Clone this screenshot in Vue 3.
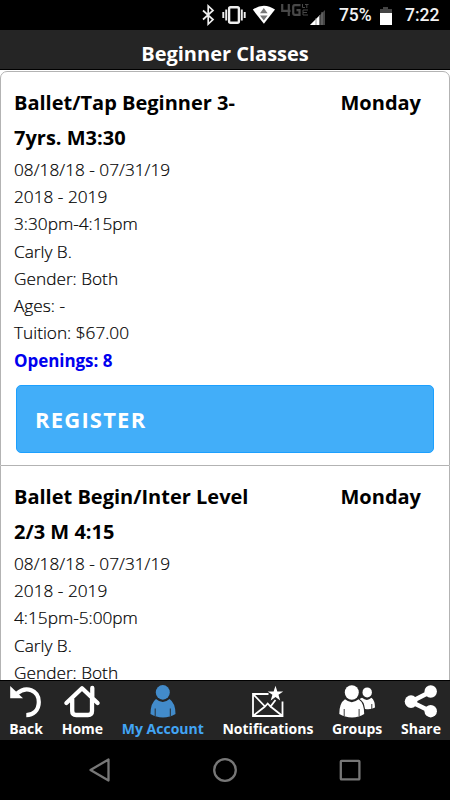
<script setup>
const classes = [
  {
    title: ['Ballet/Tap Beginner 3-', '7yrs. M3:30'],
    day: 'Monday',
    lines: ['08/18/18 - 07/31/19', '2018 - 2019', '3:30pm-4:15pm', 'Carly B.', 'Gender: Both', 'Ages: -', 'Tuition: $67.00'],
    openings: 8,
  },
  {
    title: ['Ballet Begin/Inter Level', '2/3 M 4:15'],
    day: 'Monday',
    lines: ['08/18/18 - 07/31/19', '2018 - 2019', '4:15pm-5:00pm', 'Carly B.', 'Gender: Both'],
    openings: null,
  },
]
</script>

<template>
  <div class="screen">
    <div class="status">
      <svg class="signals" width="140" height="30" viewBox="0 0 140 30">
        <path d="M3 10.5L13 19.5L8.2 24V6L13 10.5L3 19.5" fill="none" stroke="#eee" stroke-width="1.7" />
        <g fill="none" stroke="#eee">
          <rect x="29.1" y="7.2" width="9.8" height="15.6" rx="1.5" stroke-width="2.4" />
          <path d="M26.2 9.5V20.5M41.8 9.5V20.5" stroke-width="1.9" />
          <path d="M23.3 12V18M44.7 12V18" stroke-width="1.9" />
        </g>
        <path d="M52.8 9.6Q64 2 75 9.6L63.9 23.8Z" fill="#fff" />
        <path d="M60 13.2L63.8 8L67.6 13.2ZM60 15.6H67.6L63.8 20.5Z" fill="#777" />
        <g fill="none" stroke="#484848" stroke-width="2.2">
          <path d="M82.2 4V10.8H90.5M88.8 4V16M100.5 5.2H94.8Q93.2 5.2 93.2 7V13Q93.2 14.8 95 14.8H99.5V10.2H96.5" />
          <path d="M102.5 4V7.5H105M105 4.5H108.5M106.8 4.5V8M108 10H103V15H108M103 12.5H107" stroke-width="1" />
        </g>
        <path d="M110 25L125 10V25Z" fill="#444" />
        <path d="M110 25L119 16V25Z" fill="#fff" />
        <path d="M116 18V25M119.5 15V25M122 12V25" stroke="#888" stroke-width=".8" />
      </svg>
      <span class="percent">75%</span>
      <svg class="battery" width="14" height="20" viewBox="0 0 14 20">
        <path d="M4 1H9V3H13V7H1V3H4Z" fill="#444" />
        <path d="M1 7H13V19H1Z" fill="#fff" />
      </svg>
      <span class="clock">7:22</span>
    </div>

    <header class="header">Beginner Classes</header>

    <main class="list">
      <section v-for="c in classes" :key="c.title[0]" class="card">
        <div class="top">
          <h2 class="title"><span v-for="t in c.title" :key="t">{{ t }}</span></h2>
          <span class="day">{{ c.day }}</span>
        </div>
        <p v-for="line in c.lines" :key="line" class="line">{{ line }}</p>
        <p v-if="c.openings" class="line openings">Openings: {{ c.openings }}</p>
        <button v-if="c.openings" class="register">REGISTER</button>
      </section>
    </main>

    <nav class="tabs">
      <a class="tab back">
        <svg width="34" height="34" viewBox="0 0 34 34">
          <path d="M8 8.5C17 .5 29.8 5 29.8 17C29.8 25.5 24 30.2 17.3 30.2" fill="none" stroke="#fff" stroke-width="4.2" />
          <path d="M1.2 1V13.2H14Z" fill="#fff" />
        </svg>
        <span>Back</span>
      </a>
      <a class="tab home">
        <svg width="38" height="34" viewBox="0 0 38 34">
          <path d="M3.4 18L19 3.3L34.6 18M29.3 12V3M9.2 14V26Q9.2 30 13.2 30H25Q29 30 29 26V14" fill="none" stroke="#fff" stroke-width="4.3" stroke-linejoin="round" stroke-linecap="round" />
        </svg>
        <span>Home</span>
      </a>
      <a class="tab account">
        <svg width="28" height="34" viewBox="0 0 28 34">
          <g fill="#428bca">
            <ellipse cx="13.8" cy="7.4" rx="7" ry="7.3" />
            <path d="M7 14Q13.8 20 20.5 14Q26.5 18 26.5 29Q21 32.4 14 32.4Q7 32.4 1.5 29Q1.5 18 7 14Z" />
          </g>
          <path d="M6.2 23.5V31M21.3 23.5V31" stroke="#252525" stroke-width=".9" />
        </svg>
        <span>My Account</span>
      </a>
      <a class="tab notices">
        <svg width="34" height="34" viewBox="0 0 34 34">
          <path d="M17.5 9H2V31H31.5V16.5M2 9L14 21.5L16.7 18.5L19.5 21.5L24.5 15M2 31L14 21.5M31.5 31L19.5 21.5" fill="none" stroke="#fff" stroke-width="1.8" />
          <path d="M24.5 .8L26.3 6.4H32.2L27.5 9.8L29.2 15.5L24.5 12L19.7 15.5L21.4 9.8L16.7 6.4H22.6Z" fill="#fff" />
        </svg>
        <span>Notifications</span>
      </a>
      <a class="tab groups">
        <svg width="38" height="34" viewBox="0 0 38 34">
          <g fill="#fff">
            <ellipse cx="29.2" cy="7.4" rx="4.7" ry="5" />
            <path d="M24 12.8Q29 17 33.4 12.8Q37 15.5 37 22.5Q33 25 27 24Q26 16 21.5 14Z" />
            <ellipse cx="13.8" cy="7.5" rx="7" ry="7.3" />
            <path d="M7 14.3Q13.8 20 20.5 14.3Q26.2 18 26.2 29Q21 32.4 14 32.4Q7 32.4 1.3 29Q1.3 18 7 14.3Z" />
          </g>
          <path d="M6.2 24V31M21.1 24V31M33.8 19V24" stroke="#252525" stroke-width=".9" />
        </svg>
        <span>Groups</span>
      </a>
      <a class="tab share">
        <svg width="34" height="34" viewBox="0 0 34 34">
          <path d="M27 6.5L7 16.8L27 26.5" fill="none" stroke="#fff" stroke-width="4.6" />
          <g fill="#fff">
            <circle cx="26.7" cy="6.5" r="6.2" />
            <circle cx="7" cy="16.6" r="6.3" />
            <circle cx="26.7" cy="26.2" r="6.2" />
          </g>
        </svg>
        <span>Share</span>
      </a>
    </nav>

    <div class="system">
      <svg width="24" height="28" viewBox="0 0 24 28"><path d="M20.5 3.5V24.5L2.5 14Z" /></svg>
      <svg width="28" height="28" viewBox="0 0 28 28"><circle cx="14" cy="14" r="10.8" /></svg>
      <svg width="24" height="28" viewBox="0 0 24 28"><rect x="2.8" y="4.8" width="18.6" height="18.6" rx=".7" /></svg>
    </div>
  </div>
</template>

<style>
body {
  margin: 0;
  background: #000;
}
</style>

<style scoped>
.screen {
  width: 450px;
  height: 800px;
  display: flex;
  flex-direction: column;
  overflow: hidden;
  background: #000;
  font-family: "Open Sans", sans-serif;
}
.status {
  height: 30px;
  flex: none;
  display: flex;
  align-items: center;
  padding-left: 200px;
  color: #f2f2f2;
  font: 500 17.5px/33px Roboto, sans-serif;
  white-space: nowrap;
}
.signals {
  flex: none;
}
.percent {
  width: 40px;
  margin-left: -1px;
  letter-spacing: -0.1px;
}
.battery {
  flex: none;
  margin-top: 1px;
}
.clock {
  margin-left: 12px;
}
.header {
  height: 39px;
  flex: none;
  background: #252525;
  border-bottom: 1px solid #000;
  color: #fff;
  font-size: 20px;
  line-height: 47px;
  font-weight: 700;
  text-align: center;
}
.list {
  height: 609px;
  padding-top: 1px;
  flex: none;
  overflow: hidden;
  background: #fff;
}
.card {
  box-sizing: border-box;
  padding: 13px 15px 12px 13px;
  border: 1px solid #b3b3b3;
  color: #000;
}
.card:first-child {
  height: 395px;
  border-radius: 7px 7px 0 0;
}
.card + .card {
  border-top: 0;
}
.top {
  display: flex;
  justify-content: space-between;
  padding: 0 13px 1px 0;
  font-size: 20px;
  line-height: 35px;
  font-weight: 700;
}
.title {
  margin: 0;
  font-size: inherit;
  font-weight: inherit;
}
.title span {
  display: block;
}
.line {
  margin: 0;
  font-size: 17.25px;
  line-height: 27.2px;
  font-weight: 300;
  -webkit-text-stroke: 0.2px #000;
}
.openings {
  padding-top: 1px;
  color: #0000ee;
  font-size: 17px;
  font-weight: 700;
  letter-spacing: -0.05px;
  -webkit-text-stroke: 0;
}
.register {
  display: block;
  width: 418px;
  height: 68px;
  margin: 10px 0 0 2px;
  padding: 0 18px;
  border: 1px solid #1ca0ff;
  border-radius: 5px;
  background: #42aef9;
  color: #fff;
  font: 700 22px/66px "Open Sans", sans-serif;
  letter-spacing: 1.2px;
  text-align: left;
}
.tabs {
  height: 60px;
  flex: none;
  display: flex;
  justify-content: space-between;
  box-sizing: border-box;
  padding: 4px 9px 0;
  border-top: 1px solid #000;
  background: #252525;
  color: #fff;
}
.tab {
  display: flex;
  flex-direction: column;
  align-items: center;
  font-size: 14px;
  line-height: 19px;
  font-weight: 700;
}
.tab svg {
  flex: none;
}
.account {
  color: #42a5f5;
}
.system {
  height: 60px;
  flex: none;
  display: flex;
  align-items: center;
  justify-content: space-between;
  padding: 0 88px;
  background: #000;
}
.system svg {
  fill: none;
  stroke: #777;
  stroke-width: 2.3;
  stroke-linejoin: round;
}
</style>
